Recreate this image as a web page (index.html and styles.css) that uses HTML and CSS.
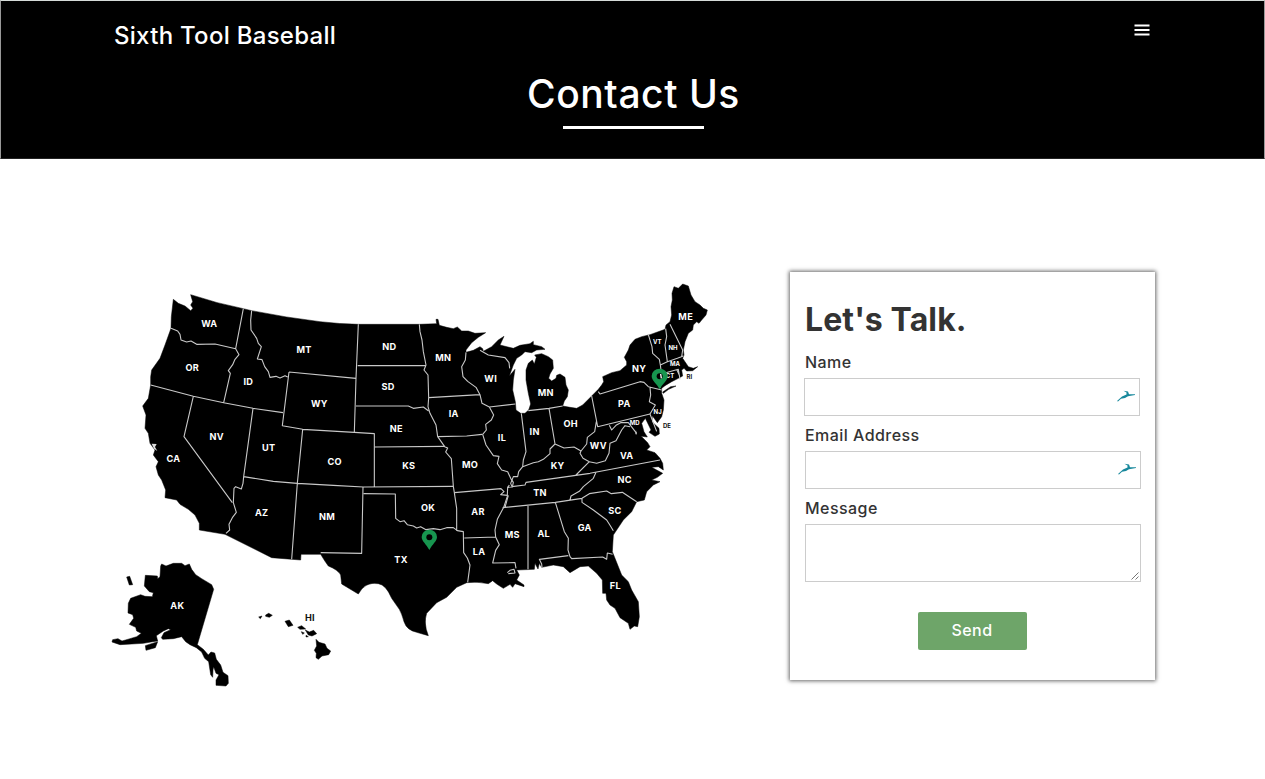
FILE: index.html
```html
<!DOCTYPE html>
<html lang="en">
<head>
<meta charset="utf-8">
<title>Sixth Tool Baseball</title>
<link rel="stylesheet" href="styles.css">
</head>
<body>
<header class="hero">
  <nav class="nav">
    <a class="brand">Sixth Tool Baseball</a>
    <svg class="menu" viewBox="0 0 16 12" aria-label="Menu"><path d="M.5 1.5h15M.5 6h15M.5 10.5h15"/></svg>
  </nav>
  <h1 class="title">Contact Us</h1>
  <div class="rule"></div>
</header>
<main class="main">
  <svg class="map" viewBox="0 0 1860 1290" role="img" aria-label="Map of locations">
    <g class="land">
      <!-- lower 48 -->
      <path d="M220 88L235 100L255 108L272 122L279 115L272 105L278 95L272 74Q350 100 430 116L455 122Q560 143 660 155Q720 162 775 163L958 163L1010 161L1008 148L1014 148L1018 166L1040 172L1060 176L1072 171L1085 183L1105 183L1125 190L1157 188L1135 202L1115 218L1098 240L1098 247L1120 241L1140 230L1148 236L1150 244L1175 230L1195 210L1212 199L1200 225L1240 235L1260 226L1290 221L1300 214L1300 224L1325 230L1335 238L1310 240L1295 248L1275 245L1265 255L1250 265L1240 285L1228 318L1245 298L1240 330L1238 360L1246 395L1248 420L1262 430L1275 430L1286 420L1292 402L1285 370L1278 330L1278 300L1285 280L1297 270L1303 282L1309 262L1304 255L1325 251L1345 260L1358 270L1360 295L1350 312L1346 325L1355 333L1368 325L1370 316L1380 312L1395 322L1398 345L1405 360L1402 380L1393 393L1388 408L1410 412L1430 415L1448 405L1475 378L1495 358L1505 345L1511 335L1508 320L1535 308L1560 302L1580 285L1580 275L1573 262L1585 240L1590 225L1605 208L1625 200L1650 194L1695 178L1698 165L1710 155L1715 135L1713 110L1717 90L1716 70L1722 50L1735 55L1748 42L1765 48L1773 75L1785 95L1800 105L1810 115L1822 120L1818 135L1805 150L1797 160L1790 155L1780 165L1778 180L1765 190L1755 215L1750 240L1752 255L1748 265L1765 290L1780 295L1793 290L1778 302L1760 303L1752 295L1745 300L1748 318L1735 325L1715 335L1695 347L1685 355L1685 370L1692 390L1690 420L1685 440L1672 458L1657 437L1656 455L1677 475L1678 492L1665 499L1647 487L1653 480L1641 455L1636 445L1625 460L1632 485L1642 501L1612 497L1608 480L1605 492L1625 500L1643 518L1650 530L1640 540L1665 548L1680 565L1688 580L1690 600L1675 590L1655 592L1670 600L1688 610L1672 622L1655 630L1680 635L1660 645L1640 665L1633 690L1610 695L1595 725L1570 750L1550 780L1540 795L1537 845L1545 865L1565 915L1585 935L1595 960L1615 995L1618 1040L1613 1070L1603 1068L1590 1078L1585 1060L1560 1043L1545 1015L1530 1005L1520 990L1518 970L1508 970L1507 930L1490 910L1465 888L1440 890L1410 908L1390 890L1360 885L1325 892L1318 880L1314 897L1305 880L1303 898L1250 900L1258 915L1250 930L1272 945L1272 950L1245 941L1238 952L1230 943L1210 955L1190 942L1178 932L1165 941Q1130 934 1100 938L1070 952L1040 982L1010 998L980 1030Q970 1060 985 1097L950 1087Q920 1080 912 1055Q905 1030 898 1018L875 985Q858 944 835 941Q795 934 775 972L725 942L722 915Q715 900 685 888Q675 875 662 853L603 853L602 870L515 863L375 793L298 780L298 760L285 735L265 718L240 703L230 690L195 683L197 660L185 630L175 615L168 590L175 575L160 555L165 540L150 520L145 490L135 475L138 435L128 408L145 385L152 345L152 320L155 300L180 265L195 225L213 175L214 140Z"/>
      <path d="M1688 366L1712 350L1728 348L1706 358L1690 370Z"/>
      <!-- Alaska -->
      <path d="M182 888L185 882L198 888L220 880L245 880L255 887L268 882L275 898L287 914L305 926L335 944L341 958L292 1124L310 1138L325 1155L333 1146L344 1149L349 1168L362 1185L369 1207L384 1217L385 1240L378 1248L348 1246L348 1230L357 1214L348 1210L341 1190L339 1200L338 1222L332 1214L326 1175L314 1165L305 1146L289 1133L270 1124L257 1115L245 1100L220 1106L188 1108L184 1103L192 1088L212 1079L205 1076L190 1083L169 1097L173 1113L158 1115L130 1120L60 1124L36 1116L38 1109L54 1106L66 1113L90 1106L110 1100L124 1090L110 1083L107 1072L88 1063L101 1045L98 1034L84 1029L85 1000L92 985L122 974L135 979L157 980L160 968L148 965L133 948L136 916L172 918L173 926L180 920Z"/>
      <path d="M80 921L89 919L98 944L88 945ZM136 1127L173 1115L166 1133L138 1141Z"/>
      <!-- Hawaii -->
      <path d="M476 1041L486 1038L481 1046ZM497 1035L506 1030L517 1036L508 1042L497 1039ZM555 1054L568 1050L579 1066L565 1070ZM593 1072L605 1067L617 1077L600 1078ZM604 1085L613 1089L608 1093ZM616 1080L628 1086L641 1081L650 1091L636 1098L625 1095ZM618 1096L625 1100L618 1101ZM648 1108L657 1117L675 1122L681 1135L692 1143L686 1154L666 1158L655 1168L648 1163L649 1150L643 1141L650 1128Z"/>
    </g>
    <g class="borders">
      <path d="M430 116L407 236M213 175L233 183L240 193L243 210L260 216L273 213L290 223L345 222L407 236L417 254L405 268L398 284L385 302L391 310L371 398M152 345L280 379L371 398L459 415L549 428M280 379L252 500L397 698"/>
      <path d="M455 122L452 150L453 180L470 205L475 220L484 230L472 267L486 269L494 290L505 305L510 322L528 319L540 324L555 317L563 321M567 306L547 467L608 478L763 487L823 491L823 651M567 306L768 325M459 415L431 620L429 640L424 657L407 650L402 655L400 698L409 727L397 743L387 763L389 780L378 790M431 620L520 634L592 640L700 646L790 651L1060 649M608 478L592 640L575 868"/>
      <path d="M775 163L768 325L763 487M773 287L978 287M768 408L925 408L940 415L970 411L986 423M823 531L1034 529M789 651L785 850L662 848M791 671L886 672L887 745L900 755L912 752L922 764L940 768L950 774L962 770L978 779L1000 776L1020 779L1040 773L1060 773L1072 782L1090 785L1091 848L1102 864L1110 885L1103 937"/>
      <path d="M958 163L960 185L966 210L970 245L978 285L972 300L984 315L986 383L984 410L990 430L1008 465L1013 500L1034 530L1043 534L1037 546L1054 566L1060 649L1063 668L1070 715L1070 782M986 383L1140 374M1013 500L1100 498L1146 493M1098 247L1096 270L1085 290L1089 320L1103 334L1128 352L1140 374L1146 400L1168 411L1181 435L1174 450L1157 463L1159 480L1148 493L1158 525L1180 557L1197 559L1192 581L1205 600L1223 605L1232 625L1240 637L1237 651L1223 652M1168 411L1246 402M1140 241L1165 255L1215 263L1227 278L1229 295"/>
      <path d="M1063 668L1203 656L1212 665L1202 674L1222 676L1223 652L1228 645M1223 676L1211 712L1192 748L1185 780L1187 801L1198 824L1187 841L1178 879L1245 878L1248 895M1093 804L1187 801M1225 911L1245 909L1242 898L1230 901L1222 908"/>
      <path d="M1264 430L1278 545L1270 570L1268 590L1256 605L1253 620L1240 620L1232 640L1236 650L1275 645L1278 637L1470 610L1680 570M1285 422L1347 415L1388 408M1347 415L1365 522L1350 537L1350 551L1330 568L1315 575L1300 578L1268 590M1365 522L1392 534L1422 531L1443 543L1460 522L1462 502L1484 485L1489 455M1475 378L1493 470L1650 432M1443 543L1440 550L1449 565L1468 575L1428 615M1468 575L1490 580L1516 572L1527 550L1530 520L1548 512L1565 480L1575 467L1590 470M1528 466L1535 480L1548 466L1562 458L1585 458L1610 490"/>
      <path d="M1495 365L1500 372L1620 335L1632 337L1645 350L1685 360M1650 352L1652 375L1648 395L1666 405L1650 432L1670 484M1645 194L1656 230L1658 250L1678 268L1681 285L1683 300L1680 353M1697 176L1700 200L1695 225L1702 275M1681 285L1702 275L1732 265L1750 258M1710 163L1748 240L1745 260M1681 313L1735 298L1740 328M1730 298L1739 318"/>
      <path d="M1208 713L1366 697L1446 685L1468 671L1520 663L1534 671L1567 667L1610 695M1446 685L1446 697L1480 720L1520 750L1530 766L1540 782M1410 690L1413 678L1438 664L1450 650L1480 625L1488 607M1284 705L1284 898M1366 697L1393 785L1405 805L1404 840L1410 860L1415 866L1508 861L1520 868L1522 849L1538 853M1405 857L1318 868L1325 882L1326 892M1225 676L1215 712"/>
    </g>
    <path class="gap" d="M155 521L170 522L165 531L172 543L162 536Z"/>
    <g class="labels">
      <text x="328" y="171">WA</text><text x="277" y="304">OR</text><text x="445" y="345">ID</text><text x="612" y="248">MT</text>
      <text x="350" y="510">NV</text><text x="506" y="544">UT</text><text x="220" y="576">CA</text><text x="658" y="412">WY</text>
      <text x="868" y="240">ND</text><text x="864" y="360">SD</text><text x="889" y="487">NE</text><text x="704" y="585">CO</text>
      <text x="926" y="598">KS</text><text x="1030" y="274">MN</text><text x="1061" y="442">IA</text><text x="1172" y="337">WI</text>
      <text x="1206" y="513">IL</text><text x="1110" y="594">MO</text><text x="1304" y="496">IN</text><text x="1337" y="377">MN</text>
      <text x="1412" y="470">OH</text><text x="1573" y="410">PA</text><text x="1617" y="305">NY</text><text x="1757" y="149">ME</text>
      <text x="1495" y="536">WV</text><text x="1580" y="568">VA</text><text x="1373" y="596">KY</text><text x="1574" y="638">NC</text>
      <text x="1320" y="678">TN</text><text x="1545" y="733">SC</text><text x="1454" y="783">GA</text><text x="1331" y="802">AL</text>
      <text x="1237" y="805">MS</text><text x="1546" y="958">FL</text><text x="1137" y="856">LA</text><text x="1134" y="736">AR</text>
      <text x="984" y="724">OK</text><text x="903" y="878">TX</text><text x="681" y="750">NM</text><text x="485" y="739">AZ</text>
      <text x="232" y="1016">AK</text><text class="dark" x="630" y="1054">HI</text>
      <g class="small">
        <text x="1672" y="221">VT</text><text x="1719" y="241">NH</text><text x="1725" y="289">MA</text><text x="1710" y="325">CT</text>
        <text x="1673" y="431">NJ</text><text x="1604" y="464">MD</text><text class="dark" x="1768" y="327">RI</text><text class="dark" x="1701" y="473">DE</text>
      </g>
    </g>
    <g class="pins">
      <path d="M988 840C979 822 965 814 965 801A23 22 0 0 1 1011 801C1011 814 997 822 988 840Z"/><circle cx="988" cy="802" r="9"/>
      <path d="M1679 358C1670 340 1655 332 1655 318A24 22 0 0 1 1703 318C1703 332 1688 340 1679 358Z"/><circle cx="1679" cy="319" r="9"/>
      <path class="fleck" d="M1682 312L1684 325"/>
    </g>
  </svg>
  <form class="card">
    <h2 class="card-title">Let's Talk.</h2>
    <label class="label">Name</label>
    <div class="field first"><svg class="bird" viewBox="0 0 18 12"><path d="M0 11L5 6.5L9.5 4.6L9.5 2.5L6.5 .8L11 1.5L12 4.3L18 4.3L18 5L11 6.3L8 8L4 8.7L1 11.5Z"/></svg></div>
    <label class="label">Email Address</label>
    <div class="field"><svg class="bird" viewBox="0 0 18 12"><path d="M0 11L5 6.5L9.5 4.6L9.5 2.5L6.5 .8L11 1.5L12 4.3L18 4.3L18 5L11 6.3L8 8L4 8.7L1 11.5Z"/></svg></div>
    <label class="label">Message</label>
    <div class="field area"><svg class="grip" viewBox="0 0 8 8"><path d="M.5 7.5L7.5 .5M4.5 7.5L7.5 4.5"/></svg></div>
    <button class="send" type="button">Send</button>
  </form>
</main>
</body>
</html>
```
FILE: styles.css
```css
* { box-sizing: border-box; }
body {
  margin: 0;
  height: 779px;
  overflow: hidden;
  background: #fff;
  color: #333;
  font-family: Inter, "Liberation Sans", sans-serif;
}
.hero {
  height: 159px;
  background: #000;
  border: 1px solid #999;
  border-top-color: #d5dbd8;
  border-bottom-color: #222;
  color: #fff;
  display: flex;
  flex-direction: column;
  align-items: center;
}
.nav {
  width: 1037px;
  height: 66px;
  padding-top: 19px;
  display: flex;
  justify-content: space-between;
  align-items: flex-start;
}
.brand { padding-top: 1px; font-size: 24px; line-height: 30px; font-weight: 500; letter-spacing: .28px; white-space: nowrap; }
.menu { width: 16px; height: 12px; margin: 4px 1px 0 0; }
.menu path { stroke: #fff; stroke-width: 2.2; }
.title { margin: 2px 0 0 2px; font-size: 39px; line-height: 50px; font-weight: 500; letter-spacing: .55px; white-space: nowrap; }
.rule { width: 141px; height: 3px; margin: 7px 0 0 2px; background: #fff; }
.main { display: flex; padding: 111px 0 0 100px; }
.map { width: 620px; height: 430px; flex: none; }
.land { fill: #000; stroke: #000; stroke-width: 1.5; stroke-linejoin: round; }
.borders { fill: none; stroke: #c8c8c8; stroke-width: 3.3; stroke-linejoin: round; }
.gap { fill: #ddd; }
.labels { fill: #fff; font-size: 27.5px; font-weight: 700; text-anchor: middle; letter-spacing: .8px; }
.small { font-size: 18px; letter-spacing: 0; }
.labels .dark { fill: #111; }
.pins path { fill: #17954f; }
.pins circle { fill: #000; }
.pins .fleck { stroke: #fff; stroke-width: 4; }
.card {
  width: 365px;
  height: 408px;
  margin: 2px 0 0 70px;
  padding: 26px 14px 0 15px;
  background: #fff;
  box-shadow: 0 0 4px 1px rgba(0, 0, 0, .6);
  display: flex;
  flex-direction: column;
}
.card-title { margin: 0 0 9px; font-size: 32px; line-height: 44px; font-weight: 700; letter-spacing: .1px; white-space: nowrap; }
.label { font-size: 16px; line-height: 22px; margin-bottom: 5px; font-weight: 500; letter-spacing: .45px; }
.field {
  width: 336px;
  height: 38px;
  margin-bottom: 8px;
  padding-right: 4px;
  border: 1px solid #ccc;
  display: flex;
  justify-content: flex-end;
  align-items: center;
  flex: none;
}
.first { margin-left: -1px; }
.bird { width: 18px; height: 12px; margin-bottom: 2px; fill: #17889c; }
.area { height: 58px; padding: 0 1px 1px; align-items: flex-end; margin-bottom: 30px; }
.grip { width: 8px; height: 8px; }
.grip path { stroke: #777; fill: none; }
.send {
  align-self: center;
  width: 109px;
  height: 38px;
  margin: -.5px 2px 0 0;
  padding: 0 0 2px;
  border: 0;
  border-radius: 2px;
  background: #6ea569;
  color: #fff;
  font: 500 16px Inter, "Liberation Sans", sans-serif;
  letter-spacing: .45px;
}
```
